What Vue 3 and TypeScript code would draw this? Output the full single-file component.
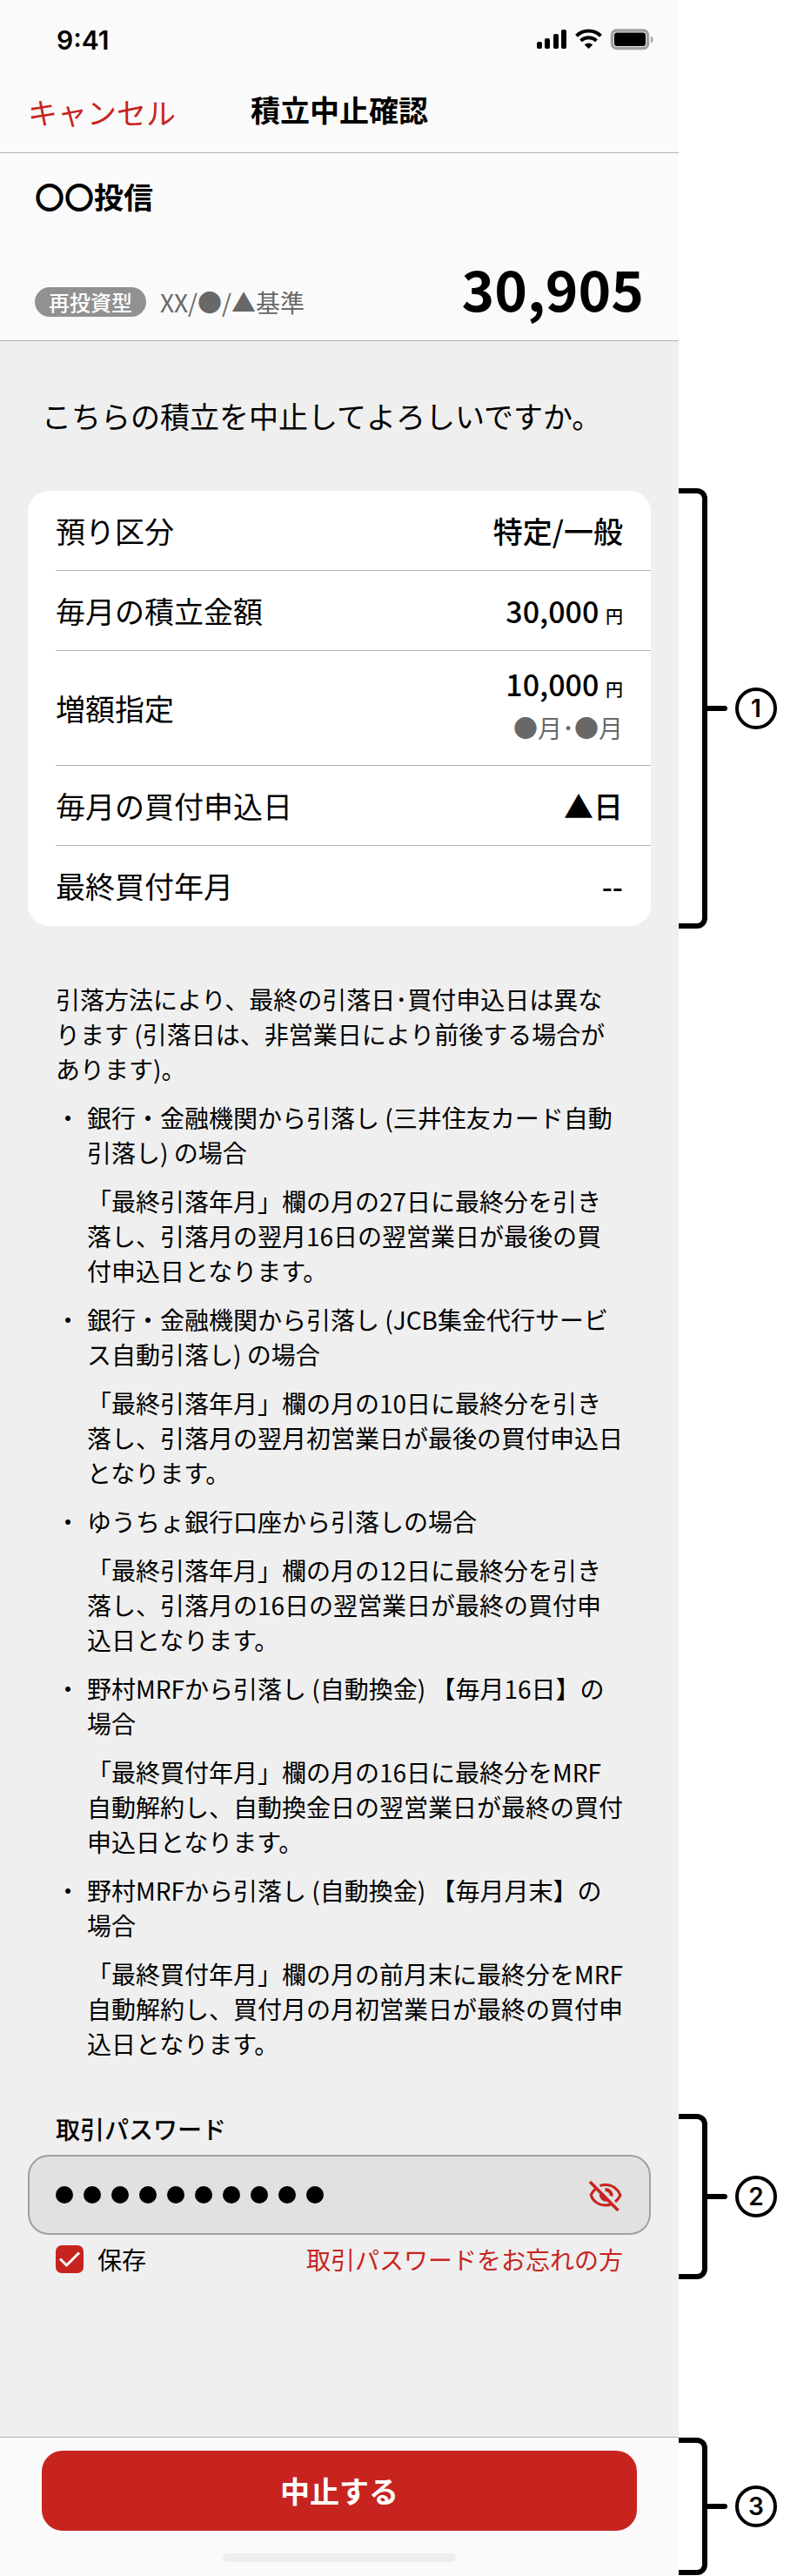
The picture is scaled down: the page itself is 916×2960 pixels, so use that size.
<script setup lang="ts">
import { computed, ref } from 'vue'

interface DetailRow {
  label: string
  value: string
  unit?: string
  sub?: string
}

interface NoteItem {
  heading: string
  body: string
}

const rows: DetailRow[] = [
  { label: '預り区分', value: '特定/一般' },
  { label: '毎月の積立金額', value: '30,000', unit: '円' },
  { label: '増額指定', value: '10,000', unit: '円', sub: '●月･●月' },
  { label: '毎月の買付申込日', value: '▲日' },
  { label: '最終買付年月', value: '--' },
]

const notes: NoteItem[] = [
  {
    heading: '銀行・金融機関から引落し (三井住友カード自動引落し) の場合',
    body: '「最終引落年月」欄の月の27日に最終分を引き落し、引落月の翌月16日の翌営業日が最後の買付申込日となります。',
  },
  {
    heading: '銀行・金融機関から引落し (JCB集金代行サービス自動引落し) の場合',
    body: '「最終引落年月」欄の月の10日に最終分を引き落し、引落月の翌月初営業日が最後の買付申込日となります。',
  },
  {
    heading: 'ゆうちょ銀行口座から引落しの場合',
    body: '「最終引落年月」欄の月の12日に最終分を引き落し、引落月の16日の翌営業日が最終の買付申込日となります。',
  },
  {
    heading: '野村MRFから引落し (自動換金) 【毎月16日】の場合',
    body: '「最終買付年月」欄の月の16日に最終分をMRF自動解約し、自動換金日の翌営業日が最終の買付申込日となります。',
  },
  {
    heading: '野村MRFから引落し (自動換金) 【毎月月末】の場合',
    body: '「最終買付年月」欄の月の前月末に最終分をMRF自動解約し、買付月の月初営業日が最終の買付申込日となります。',
  },
]

const password = ref('password12')
const savePassword = ref(true)
const dotCount = computed(() => password.value.length)
</script>

<template>
  <main class="page">
    <header class="screen top">
      <div class="status">
        <span class="time">9:41</span>
        <svg class="status-icons" width="136" height="26" viewBox="0 0 136 26" aria-hidden="true">
          <rect x="1" y="15" width="6" height="8" rx="2" />
          <rect x="10" y="11" width="6" height="12" rx="2" />
          <rect x="20" y="6" width="6" height="17" rx="2" />
          <rect x="29" y="1" width="6" height="22" rx="2" />
          <g fill="none" stroke="#000" stroke-width="4">
            <path d="M46.5 8.2a20 20 0 0 1 28 0" />
            <path d="M51.5 13.9a13 13 0 0 1 18 0" />
          </g>
          <path d="M55.7 18.4a7 7 0 0 1 9.600 0L60.500 23z" />
          <rect x="87.500" y="2" width="41" height="20.500" rx="5" fill="none" stroke="#a1a1a1" stroke-width="3.500" />
          <rect x="90" y="4.500" width="36" height="15.500" rx="3" />
          <path d="M132 8.500c3.500 1.500 3.500 6.500 0 8z" fill="#a1a1a1" />
        </svg>
      </div>
      <nav class="nav">
        <button type="button" class="cancel">キャンセル</button>
        <h1 class="title">積立中止確認</h1>
      </nav>
      <section class="fund">
        <h2 class="fund-name">〇〇投信</h2>
        <div class="fund-meta">
          <span class="badge">再投資型</span>
          <span class="date">XX/●/▲基準</span>
          <strong class="price">30,905</strong>
        </div>
      </section>
    </header>

    <p class="screen question">こちらの積立を中止してよろしいですか。</p>

    <section class="screen details">
      <dl class="card">
        <div v-for="row in rows" :key="row.label" class="row" :class="{ tall: row.sub }">
          <dt>{{ row.label }}</dt>
          <dd>
            <span class="value">{{ row.value }}<template v-if="row.unit">&nbsp;<small>{{ row.unit }}</small></template></span>
            <span v-if="row.sub" class="sub">{{ row.sub }}</span>
          </dd>
        </div>
      </dl>
    </section>
    <aside class="callout callout-details">
      <span class="bracket"></span><span class="tick"></span><span class="number">1</span>
    </aside>

    <section class="screen notes">
      <p>引落方法により、最終の引落日･買付申込日は異なります (引落日は、非営業日により前後する場合があります)。</p>
      <ul>
        <li v-for="note in notes" :key="note.heading">
          <p class="note-heading">{{ note.heading }}</p>
          <p>{{ note.body }}</p>
        </li>
      </ul>
    </section>

    <section class="screen password">
      <label for="trade-password" class="field-label">取引パスワード</label>
      <div class="field">
        <input id="trade-password" v-model="password" type="password" autocomplete="off" />
        <span class="dots" aria-hidden="true"><i v-for="n in dotCount" :key="n"></i></span>
        <button type="button" class="eye" aria-label="パスワードを表示">
          <svg width="40" height="40" viewBox="0 0 40 40" fill="none" stroke="#c72420" stroke-width="3" aria-hidden="true">
            <path d="M13.500 9.700Q16.500 8.500 20 8.500C28.500 8.500 34.500 14 37 20.500C35.500 23.500 33.500 26 31 28" />
            <path d="M9 13C6 15 4.200 17.500 3.200 20.500C5.500 27.500 12 32 20 32Q24 32 27.500 30.500" />
            <path d="M19.500 14A7 7 0 0 1 26.800 21.500" stroke-width="4" />
            <path d="M13.500 17.500A7.500 7.500 0 0 0 23.500 27z" fill="#c72420" stroke="none" />
            <path d="M2 5L34.500 38" stroke-width="3.500" />
          </svg>
        </button>
      </div>
      <div class="options">
        <label class="save"><input v-model="savePassword" type="checkbox" />保存</label>
        <a href="#" class="forgot">取引パスワードをお忘れの方</a>
      </div>
    </section>
    <aside class="callout callout-password">
      <span class="bracket"></span><span class="tick"></span><span class="number">2</span>
    </aside>

    <div class="screen spacer"></div>

    <footer class="screen footer">
      <button type="button" class="submit">中止する</button>
      <span class="home"></span>
    </footer>
    <aside class="callout callout-footer">
      <span class="bracket"></span><span class="tick"></span><span class="number">3</span>
    </aside>
  </main>
</template>

<style>
body {
  margin: 0;
  background: #fff;
}
</style>

<style scoped>
.page {
  display: grid;
  grid-template-columns: minmax(0, 1fr) 136px;
  color: #000;
  font-family: "Noto Sans CJK JP", sans-serif;
  font-size: 28px;
  line-height: 40px;
}
.page * {
  box-sizing: border-box;
}
h1,
h2,
p,
ul,
dl,
dd {
  margin: 0;
  padding: 0;
}
button,
input {
  margin: 0;
  padding: 0;
  border: 0;
  background: none;
  color: inherit;
  font: inherit;
}
.screen {
  grid-column: 1;
  background: #efefef;
}

.top {
  background: #fafafa;
  border-bottom: 1px solid #b3b3b3;
}
.status {
  display: flex;
  align-items: center;
  justify-content: space-between;
  height: 88px;
  padding: 4px 28px 0 65px;
}
.time {
  font-family: Inter, sans-serif;
  font-size: 30px;
  font-weight: 600;
}
.nav {
  display: grid;
  grid-template-columns: 1fr auto 1fr;
  align-items: center;
  height: 88px;
  padding: 0 32px 11px;
  border-bottom: 1px solid #b3b3b3;
  font-size: 34px;
}
.cancel {
  justify-self: start;
  padding-top: 6px;
  color: #c72420;
}
.title {
  font-size: 34px;
  font-weight: 700;
}
.fund {
  padding: 28px 40px 16px;
}
.fund-name {
  font-size: 34px;
  font-weight: 700;
  line-height: 44px;
}
.fund-meta {
  display: flex;
  align-items: flex-end;
  padding-top: 42px;
}
.badge {
  margin-bottom: 11px;
  padding: 0 16px;
  border-radius: 17px;
  background: #919191;
  color: #fff;
  font-size: 24px;
  font-weight: 500;
  line-height: 34px;
}
.date {
  margin: 0 auto 8px 16px;
  color: #686868;
}
.price {
  margin-bottom: 5px;
  font-size: 64px;
  font-weight: 700;
  line-height: 80px;
}

.question {
  padding: 63px 48px;
  font-size: 34px;
  line-height: 46px;
}

.details {
  padding: 0 32px;
}
.card {
  padding-left: 32px;
  border-radius: 24px;
  background: #fff;
  font-size: 34px;
}
.row {
  display: flex;
  align-items: center;
  justify-content: space-between;
  min-height: 92px;
  padding-right: 32px;
  border-bottom: 1px solid #b3b3b3;
}
.row:last-child {
  border-bottom-color: transparent;
}
.row.tall {
  min-height: 132px;
}
.row dd {
  display: flex;
  flex-direction: column;
  align-items: flex-end;
  font-weight: 500;
}
.value {
  line-height: 48px;
}
.value small {
  font-size: 20px;
  line-height: 20px;
}
.sub {
  padding: 6px 0 10px;
  color: #686868;
  font-size: 28px;
  font-weight: 400;
}

.notes {
  padding: 64px 64px 60px;
}
.notes ul {
  list-style: none;
}
.notes li {
  padding-left: 36px;
}
.notes li p {
  margin-top: 16px;
}
.note-heading::before {
  content: "・";
  float: left;
  width: 36px;
  margin-left: -36px;
}

.password {
  padding: 0 32px;
}
.field-label {
  display: block;
  padding: 0 32px 12px;
  font-weight: 500;
  line-height: 36px;
}
.field {
  position: relative;
  display: flex;
  align-items: center;
  height: 92px;
  padding: 0 30px;
  border: 2px solid #a0a0a0;
  border-radius: 24px;
  background: #e1e1e1;
}
.field input {
  flex: 1;
  min-width: 0;
  height: 88px;
  outline: 0;
  color: transparent;
}
.dots {
  position: absolute;
  left: 30px;
  display: flex;
  gap: 12px;
  pointer-events: none;
}
.dots i {
  width: 20px;
  height: 20px;
  border-radius: 50%;
  background: #000;
}
.eye,
.eye svg {
  display: block;
}
.options {
  display: flex;
  align-items: center;
  justify-content: space-between;
  height: 56px;
  padding: 0 32px;
}
.save {
  display: flex;
  align-items: center;
  gap: 16px;
}
.save input {
  width: 32px;
  height: 32px;
  border-radius: 7px;
  appearance: none;
  background: #fff;
}
.save input:checked {
  background: #c72420 url("data:image/svg+xml,%3Csvg xmlns='http://www.w3.org/2000/svg' viewBox='0 0 32 32'%3E%3Cpath d='M5 15.500l7.500 7.500L27 8.500' fill='none' stroke='%23fff' stroke-width='3'/%3E%3C/svg%3E");
}
.forgot {
  color: #c72420;
  text-decoration: none;
}

.spacer {
  height: 176px;
}
.footer {
  display: flex;
  flex-direction: column;
  align-items: center;
  padding: 15px 48px 16px;
  border-top: 1px solid #b3b3b3;
  background: #fafafa;
}
.submit {
  width: 100%;
  height: 92px;
  border-radius: 24px;
  background: #c72420;
  color: #fff;
  font-size: 34px;
  font-weight: 700;
}
.home {
  width: 268px;
  height: 10px;
  margin-top: 26px;
  border-radius: 5px;
  background: #ededed;
}

.callout {
  grid-column: 2;
  display: flex;
  align-items: center;
}
.callout-details {
  margin: -3px 0;
}
.callout-password {
  margin: 1px 0 5px;
}
.callout-footer {
  margin: 1px 0;
}
.bracket {
  align-self: stretch;
  width: 33px;
  border: 6px solid #000;
  border-left: 0;
  border-radius: 0 12px 12px 0;
}
.tick {
  width: 23px;
  height: 6px;
  border-radius: 0 3px 3px 0;
  background: #000;
}
.number {
  width: 48px;
  height: 48px;
  margin-left: 9px;
  border: 4px solid #000;
  border-radius: 50%;
  font-family: Inter, sans-serif;
  font-weight: 600;
  text-align: center;
}
</style>
